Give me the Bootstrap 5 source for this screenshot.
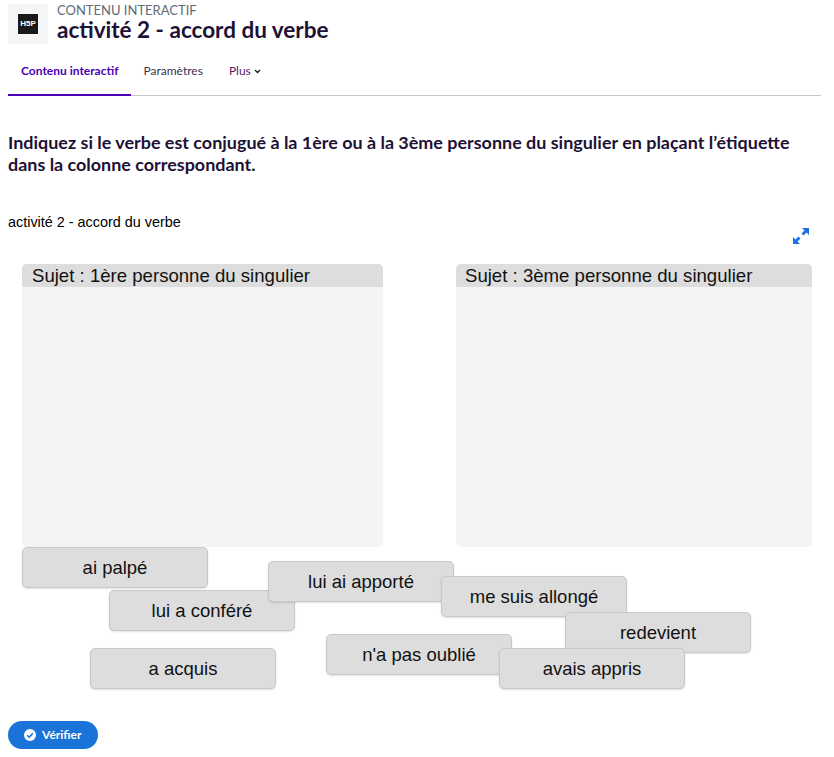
<!DOCTYPE html>
<html lang="fr">
<head>
<meta charset="UTF-8">
<meta name="viewport" content="width=device-width, initial-scale=1">
<title>activité 2 - accord du verbe</title>
<link rel="stylesheet" href="https://cdn.jsdelivr.net/npm/bootstrap@5.3.0/dist/css/bootstrap.min.css">
<style>
body { font-family: Lato, sans-serif; color: #1d1135; background: #fff; }
.page-wrap { padding: 0 13px 0 8px; height: 757px; overflow: hidden; }
.top-head { height: 44px; margin-top: 4px; }
.logo-box { width: 40px; height: 40px; background: #f5f6f8; border-radius: 4px; margin-right: 9px; }
.logo-mark { width: 20px; height: 20px; background: #1a1a1a; color: #fff; font: 700 8px/20px "Liberation Sans", sans-serif; text-align: center; }
.kicker { font-size: 13px; line-height: 13px; color: #5e6b7a; margin-top: 0; }
.main-title { font-size: 22.500px; line-height: 26px; font-weight: 700; margin: 0; color: #1d1135; }
.tab-row { height: 48px; border-bottom: 1px solid #c8c5cc; }
.tab-item { padding: 0 13px; font-size: 12px; line-height: 45px; color: #3b3350; height: 48px; }
.tab-item.on { color: #4b00b8; font-weight: 700; border-bottom: 2px solid #4b00b8; padding-right: 12px; }
.tab-more { color: #5a1a6e; }
.instr { font-size: 17.950px; line-height: 22px; font-weight: 700; margin: 35px 0 0; color: #1d1135; }
.activity-name { font: 14.400px/18px "Liberation Sans", sans-serif; color: #000; margin-top: 38px; }
.drag-canvas { position: relative; height: 499px; font-family: "Liberation Sans", sans-serif; }
.full-icon { position: absolute; left: 784px; top: -4px; }
.drop-cols { position: absolute; left: 14px; top: 33px; width: 790px; display: flex; gap: 73px; }
.drop-col { height: 283px; background: #f4f4f4; border-radius: 5px; overflow: hidden; }
.drop-col.c1 { width: 361px; }
.drop-col.c2 { width: 356px; }
.drop-head { height: 23px; background: #ddd; font-size: 18.600px; line-height: 24px; padding-left: 10px; color: #111; }
.drop-col.c2 .drop-head { padding-left: 9px; }
.tag { position: absolute; width: 186px; height: 41px; background: #ddd; border: 1px solid #c8c8c8; border-radius: 5px; box-shadow: 0 1px 2px rgba(0,0,0,.12); font-size: 18.500px; line-height: 39px; text-align: center; color: #111; }
.check-btn { position: absolute; left: 0; top: 490px; height: 28px; width: 90px; background: #1a73d9; color: #fff; border: 0; border-radius: 14px; font: 700 12px/28px Lato, sans-serif; padding: 0 0 0 16px; gap: 6px; }
</style>
</head>
<body>
<div class="page-wrap">
  <div class="top-head d-flex">
    <div class="logo-box d-flex align-items-center justify-content-center">
      <div class="logo-mark">H5P</div>
    </div>
    <div>
      <div class="kicker">CONTENU INTERACTIF</div>
      <h1 class="main-title">activité 2 - accord du verbe</h1>
    </div>
  </div>
  <div class="tab-row d-flex">
    <div class="tab-item on">Contenu interactif</div>
    <div class="tab-item">Paramètres</div>
    <div class="tab-item tab-more">Plus
      <svg width="7" height="5" viewBox="0 0 7 5"><path d="M1 1l2.500 2.500L6 1" fill="none" stroke="#1d1135" stroke-width="1.300"/></svg>
    </div>
  </div>
  <p class="instr">Indiquez si le verbe est conjugué à la 1ère ou à la 3ème personne du singulier en plaçant l’étiquette dans la colonne correspondant.</p>
  <div class="activity-name">activité 2 - accord du verbe</div>
  <div class="drag-canvas">
    <svg class="full-icon" width="18" height="18" viewBox="0 0 18 18">
      <path d="M10 1h7v7l-2.500-2.500-3 3-2-2 3-3zM8 17H1v-7l2.500 2.500 3-3 2 2-3 3z" fill="#1f6fe0"/>
    </svg>
    <div class="drop-cols">
      <div class="drop-col c1"><div class="drop-head">Sujet : 1ère personne du singulier</div></div>
      <div class="drop-col c2"><div class="drop-head">Sujet : 3ème personne du singulier</div></div>
    </div>
    <div class="tag" style="left:14px;top:316px">ai palpé</div>
    <div class="tag" style="left:101px;top:359px">lui a conféré</div>
    <div class="tag" style="left:260px;top:330px">lui ai apporté</div>
    <div class="tag" style="left:433px;top:345px">me suis allongé</div>
    <div class="tag" style="left:557px;top:381px">redevient</div>
    <div class="tag" style="left:82px;top:417px">a acquis</div>
    <div class="tag" style="left:318px;top:403px">n'a pas oublié</div>
    <div class="tag" style="left:491px;top:417px">avais appris</div>
    <button class="check-btn d-flex align-items-center" type="button">
      <svg width="12" height="12" viewBox="0 0 12 12"><circle cx="6" cy="6" r="6" fill="#fff"/><path d="M3.200 6.200l2 2 3.600-3.800" fill="none" stroke="#1a73d9" stroke-width="1.600"/></svg>
      Vérifier
    </button>
  </div>
</div>
<script src="https://cdn.jsdelivr.net/npm/bootstrap@5.3.0/dist/js/bootstrap.bundle.min.js"></script>
</body>
</html>
